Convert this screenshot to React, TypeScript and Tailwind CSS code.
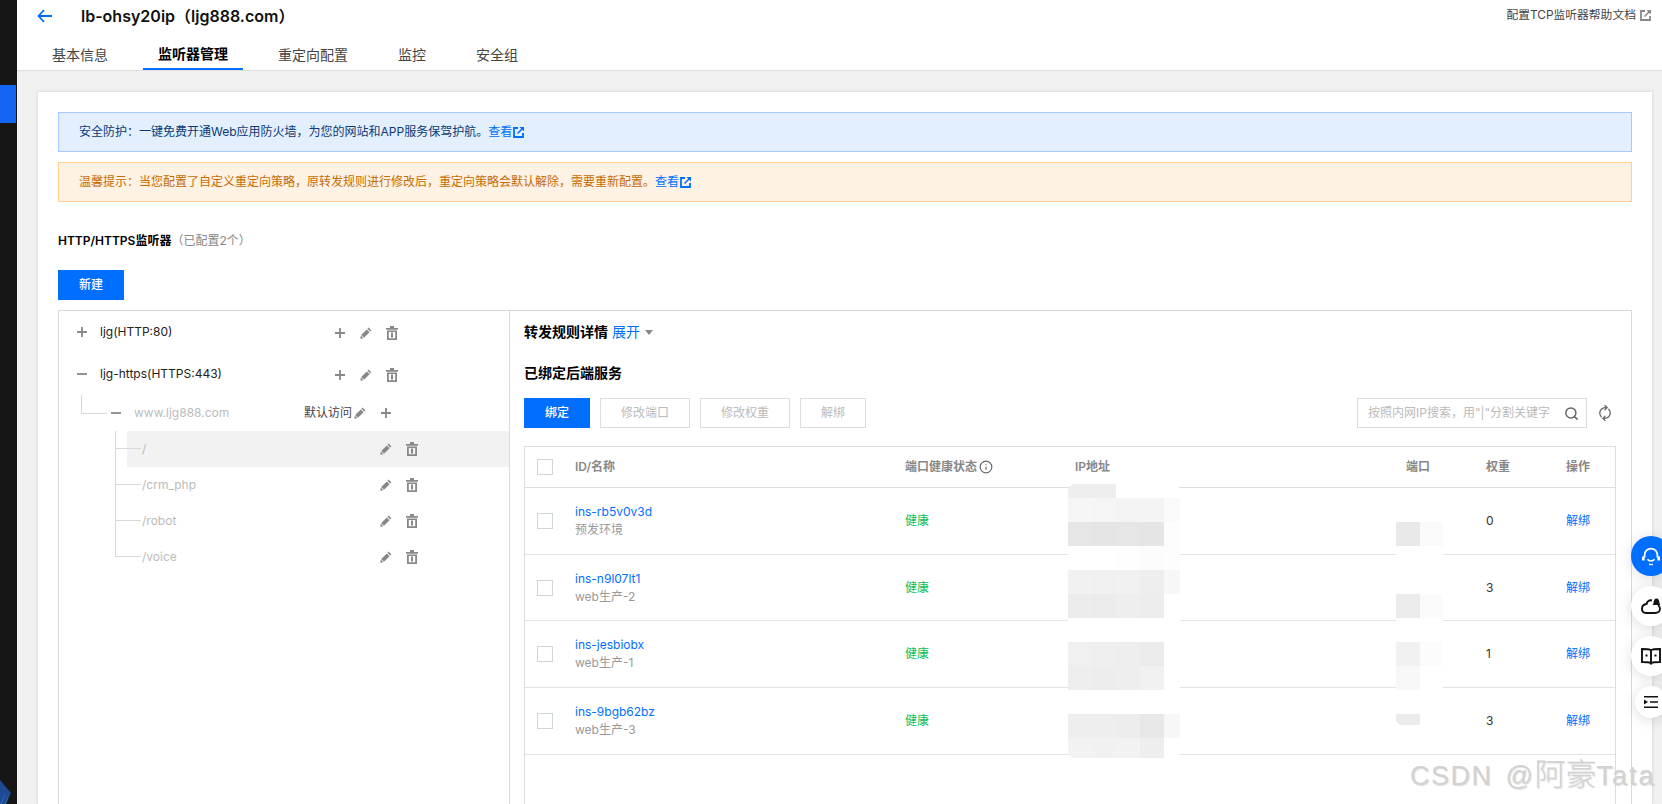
import { Search, RefreshCw, Info } from "lucide-react";

function Plus({ cls = "" }: { cls?: string }) {
  return (
    <svg width="10" height="10" viewBox="0 0 10 10" className={cls}>
      <path d="M0 4.100h10v1.800H0zM4.100 0h1.800v10H4.100z" fill="#888888" />
    </svg>
  );
}
function Minus() {
  return (
    <svg width="10" height="10" viewBox="0 0 10 10" className="shrink-0">
      <path d="M0 4.100h10v1.800H0z" fill="#888888" />
    </svg>
  );
}
function Pencil() {
  return (
    <svg width="12" height="12" viewBox="0 0 12 12" className="shrink-0">
      <path d="M8.600.6l2.800 2.800-1.200 1.200L7.400 1.800zM6.800 2.400l2.800 2.800-5.600 5.600-2.800-2.800zM.8 8.600l2.600 2.600-3.100.6z" fill="#888888" />
    </svg>
  );
}
function Trash() {
  return (
    <svg width="12" height="14" viewBox="0 0 12 14" className="shrink-0">
      <path d="M4 0h4v2h4v1.800H0V2h4zM1 4.600h10V14H1zm1.800 1.400v6.200h6.400V6zM5 6.600h2v5H5z" fill="#888888" fillRule="evenodd" />
    </svg>
  );
}
function Ext({ color }: { color: string }) {
  return (
    <svg width="11" height="11" viewBox="0 0 11 11" className="shrink-0">
      <path d="M5 1H1v9h9V6" fill="none" stroke={color} strokeWidth="1.800" />
      <path d="M6.500 0H11v4.500L9.300 2.800 5 7 4 6l4.200-4.300z" fill={color} />
    </svg>
  );
}

function Actions({ pr }: { pr: string }) {
  return (
    <div className={`ml-auto flex items-center gap-[14px] ${pr}`}>
      <Pencil />
      <Trash />
    </div>
  );
}

function TopRow({ open, label }: { open?: boolean; label: string }) {
  return (
    <div className="flex h-[42px] items-center pl-[18px] text-xs text-[#222222]">
      {open ? <Minus /> : <Plus cls="shrink-0" />}
      <span className="ml-[13px]">{label}</span>
      <div className="ml-auto flex items-center gap-[14px] pr-[111px] pt-[2px]">
        <Plus cls="mr-px" />
        <Pencil />
        <Trash />
      </div>
    </div>
  );
}

function Sub({ label, active, last }: { label: string; active?: boolean; last?: boolean }) {
  return (
    <div className={`ml-[68px] flex h-[36px] ${active ? "bg-[#f2f2f2]" : ""}`}>
      <div className="ml-[-12px] w-[26px] shrink-0">
        <div className="h-[18px] border-b border-l border-[#d9d9d9]" />
        {!last && <div className="h-[18px] border-l border-[#d9d9d9]" />}
      </div>
      <div className="ml-px flex flex-1 items-center text-xs text-[#bbbbbb]">
        <span>{label}</span>
        <Actions pr="pr-[91px]" />
      </div>
    </div>
  );
}

const cols = "grid grid-cols-[50px_330px_170px_331px_80px_80px_1fr]";

const rows = [
  { id: "ins-rb5v0v3d", sub: "预发环境", w: "0", h: "h-[67px]" },
  { id: "ins-n9l07lt1", sub: "web生产-2", w: "3", h: "h-[66px]" },
  { id: "ins-jesbiobx", sub: "web生产-1", w: "1", h: "h-[67px]" },
  { id: "ins-9bgb62bz", sub: "web生产-3", w: "3", h: "h-[67px]" },
];

function Check() {
  return <div className="ml-3 h-4 w-4 border border-[#cfd5de] bg-white" />;
}

const ipCells = [
  ["h-[14px] bg-[#eeeeee]", "h-[14px] bg-[#eeeeee]", "h-[14px] bg-white", "h-[14px] bg-white", "h-[14px] bg-white"],
  ["h-6 bg-[#f6f6f6]", "h-6 bg-[#f5f5f5]", "h-6 bg-[#f4f4f4]", "h-6 bg-[#f4f4f4]", "h-6 bg-[#fafafa]"],
  ["h-6 bg-[#e6e6e6]", "h-6 bg-[#e5e5e5]", "h-6 bg-[#e6e6e6]", "h-6 bg-[#e5e5e5]", "h-6 bg-[#fdfdfd]"],
  ["h-6 bg-white", "h-6 bg-white", "h-6 bg-[#fefefe]", "h-6 bg-[#fcfcfc]", "h-6 bg-[#fdfdfd]"],
  ["h-6 bg-[#f1f1f1]", "h-6 bg-[#f0f0f0]", "h-6 bg-[#f1f1f1]", "h-6 bg-[#eeeeee]", "h-6 bg-[#f7f7f7]"],
  ["h-6 bg-[#ececec]", "h-6 bg-[#ebebeb]", "h-6 bg-[#eeeeee]", "h-6 bg-[#ededed]", "h-6 bg-white"],
  ["h-6 bg-white", "h-6 bg-white", "h-6 bg-white", "h-6 bg-white", "h-6 bg-white"],
  ["h-6 bg-[#f0f0f0]", "h-6 bg-[#efefef]", "h-6 bg-[#eeeeee]", "h-6 bg-[#ebebeb]", "h-6 bg-white"],
  ["h-6 bg-[#eeeeee]", "h-6 bg-[#ededed]", "h-6 bg-[#eeeeee]", "h-6 bg-[#f1f1f1]", "h-6 bg-white"],
  ["h-6 bg-white", "h-6 bg-white", "h-6 bg-white", "h-6 bg-white", "h-6 bg-white"],
  ["h-6 bg-[#eeeeee]", "h-6 bg-[#eeeeee]", "h-6 bg-[#ededed]", "h-6 bg-[#e8e8e8]", "h-6 bg-[#f7f7f7]"],
  ["h-5 bg-[#f2f2f2]", "h-5 bg-[#f1f1f1]", "h-5 bg-[#f2f2f2]", "h-5 bg-[#eeeeee]", "h-5 bg-white"],
];

const portCells = [
  ["h-6 bg-white", "h-6 bg-white"],
  ["h-6 bg-[#e9e9e9]", "h-6 bg-[#fafafa]"],
  ["h-12 bg-white", "h-12 bg-white"],
  ["h-6 bg-[#ebebeb]", "h-6 bg-[#fbfbfb]"],
  ["h-6 bg-white", "h-6 bg-white"],
  ["h-6 bg-[#f1f1f1]", "h-6 bg-[#fcfcfc]"],
  ["h-6 bg-[#f8f8f8]", "h-6 bg-white"],
  ["h-6 bg-white", "h-6 bg-white"],
  ["h-[11px] bg-[#ebebeb]", "h-[11px] bg-white"],
];

export default function App() {
  return (
    <div className="relative flex h-[804px] w-full overflow-hidden bg-[#f1f1f1] font-['Inter','Noto_Sans_CJK_SC',sans-serif]">
      {/* sidebar */}
      <aside className="flex w-[17px] shrink-0 flex-col bg-[#161616] pt-[85px]">
        <div className="h-[38px] w-4 bg-[#1465f5]" />
        <svg width="12" height="24" viewBox="0 0 12 24" className="mt-auto">
          <path d="M0 0l11 13-5 11H0z" fill="#1d4a90" />
          <path d="M1 24l4-10M5 24l3-7" stroke="#2f66b8" strokeWidth="1" />
        </svg>
      </aside>

      <main className="flex min-w-0 flex-1 flex-col">
        {/* header */}
        <header className="h-[71px] shrink-0 border-b border-[#dddddd] bg-white">
          <div className="flex h-[31px] items-center">
            <svg width="15" height="14" viewBox="0 0 15 14" className="ml-5 shrink-0">
              <path d="M7 1L1.500 7 7 13M1.500 7H15" fill="none" stroke="#006eff" strokeWidth="1.800" />
            </svg>
            <h1 className="ml-[29px] text-base font-semibold text-[#111111]">lb-ohsy20ip（ljg888.com）</h1>
            <a className="ml-auto flex items-center gap-1 pr-[11px] text-[11.800px] text-[#444444]">
              配置TCP监听器帮助文档
              <Ext color="#888888" />
            </a>
          </div>
          <nav className="mt-[9px] flex h-[30px] text-sm text-[#444444]">
            <div className="ml-[35px] flex h-[30px] items-center">基本信息</div>
            <div className="ml-[35px] flex h-[30px] items-center border-b-2 border-[#006eff] px-[15px] font-semibold text-black">监听器管理</div>
            <div className="ml-[35px] flex h-[30px] items-center">重定向配置</div>
            <div className="ml-[50px] flex h-[30px] items-center">监控</div>
            <div className="ml-[50px] flex h-[30px] items-center">安全组</div>
          </nav>
        </header>

        {/* content */}
        <div className="flex min-h-0 flex-1 flex-col pl-[20px] pr-[9px] pt-5">
          <div className="flex min-h-0 flex-1 flex-col border-l border-r border-t border-[#e4e4e4] bg-white pl-5 pr-5 pt-5 shadow-[0_0_4px_rgba(0,0,0,0.06)]">
            <div className="flex h-10 shrink-0 items-center border border-[#a6c9ff] bg-[#e3effd] pl-5 text-xs text-[#0b3a75]">
              安全防护：一键免费开通Web应用防火墙，为您的网站和APP服务保驾护航。
              <span className="text-[#006eff]">查看</span>
              <span className="ml-px"><Ext color="#006eff" /></span>
            </div>
            <div className="mt-[10px] flex h-10 shrink-0 items-center border border-[#ffd08f] bg-[#fef2e4] pl-5 text-xs text-[#c76b00]">
              温馨提示：当您配置了自定义重定向策略，原转发规则进行修改后，重定向策略会默认解除，需要重新配置。
              <span className="text-[#006eff]">查看</span>
              <span className="ml-px"><Ext color="#006eff" /></span>
            </div>

            <div className="mt-[29px] flex h-5 shrink-0 items-center text-xs">
              <span className="font-semibold text-black">HTTP/HTTPS监听器</span>
              <span className="text-[#888888]">（已配置2个）</span>
            </div>
            <button className="mt-[19px] h-[30px] w-[66px] shrink-0 bg-[#006eff] text-xs font-medium text-white">新建</button>

            <div className="mt-[10px] flex min-h-0 flex-1 border-l border-r border-t border-[#d9d9d9]">
              {/* tree */}
              <section className="w-[451px] shrink-0 border-r border-[#d9d9d9]">
                <TopRow label="ljg(HTTP:80)" />
                <TopRow open label="ljg-https(HTTPS:443)" />
                <div className="flex h-9 items-center">
                  <div className="ml-[22px] mt-[-18px] h-[19px] w-[26px] shrink-0 border-b border-l border-[#d9d9d9]" />
                  <div className="ml-1"><Minus /></div>
                  <span className="ml-[13px] text-xs text-[#bbbbbb]">www.ljg888.com</span>
                  <div className="ml-auto flex items-center pr-[118px]">
                    <span className="text-xs text-[#444444]">默认访问</span>
                    <span className="ml-[2px]"><Pencil /></span>
                    <Plus cls="ml-[15px]" />
                  </div>
                </div>
                <Sub label="/" active />
                <Sub label="/crm_php" />
                <Sub label="/robot" />
                <Sub label="/voice" last />
              </section>

              {/* detail */}
              <section className="flex min-w-0 flex-1 flex-col pl-[14px] pr-[15px]">
                <div className="flex h-[42px] shrink-0 items-center text-sm">
                  <span className="font-semibold text-black">转发规则详情</span>
                  <span className="ml-1 text-[#006eff]">展开</span>
                  <svg width="8" height="5" viewBox="0 0 8 5" className="ml-[5px]"><path d="M0 0h8L4 5z" fill="#888888" /></svg>
                </div>
                <div className="flex h-[40px] shrink-0 items-center text-sm font-semibold text-black">已绑定后端服务</div>
                <div className="mt-[5px] flex h-[30px] shrink-0 items-stretch gap-[10px] text-xs">
                  <button className="w-[66px] bg-[#006eff] font-medium text-white">绑定</button>
                  <button className="w-[90px] border border-[#dddddd] text-[#bbbbbb]">修改端口</button>
                  <button className="w-[90px] border border-[#dddddd] text-[#bbbbbb]">修改权重</button>
                  <button className="w-[66px] border border-[#dddddd] text-[#bbbbbb]">解绑</button>
                  <div className="ml-auto flex w-[230px] items-center border border-[#dddddd] pl-[10px] pr-[7px] text-[#bbbbbb]">
                    <span className="truncate">按照内网IP搜索，用"|"分割关键字</span>
                    <Search size={15} strokeWidth={2.4} color="#666666" className="ml-auto shrink-0" />
                  </div>
                  <div className="flex w-[19px] items-center pl-px">
                    <RefreshCw size={14} strokeWidth={2.2} color="#666666" className="rotate-[-45deg]" />
                  </div>
                </div>

                {/* table */}
                <div className="mt-[18px] min-h-0 flex-1 border-l border-r border-t border-[#dddddd]">
                  <div className={`${cols} h-[41px] items-center border-b border-[#dddddd] text-xs font-semibold text-[#888888]`}>
                    <Check />
                    <div>ID/名称</div>
                    <div className="flex items-center gap-[2px]">端口健康状态<Info size={14} color="#666666" /></div>
                    <div>IP地址</div>
                    <div>端口</div>
                    <div>权重</div>
                    <div>操作</div>
                  </div>
                  {rows.map((r) => (
                    <div key={r.id} className={`${cols} ${r.h} items-center border-b border-[#e3e3e3] text-xs`}>
                      <Check />
                      <div className="leading-[18px]">
                        <div className="text-[#006eff]">{r.id}</div>
                        <div className="text-[#999999]">{r.sub}</div>
                      </div>
                      <div className="text-[#0abf5b]">健康</div>
                      <div />
                      <div />
                      <div className="text-[#333333]">{r.w}</div>
                      <div className="text-[#006eff]">解绑</div>
                    </div>
                  ))}
                </div>
              </section>
            </div>
          </div>
        </div>
      </main>

      {/* redaction mosaics lying over the table */}
      <div className="absolute left-[1068px] top-[484px] grid w-[112px] grid-cols-[24px_24px_24px_24px_16px] overflow-hidden rounded-[7px]">
        {ipCells.flat().map((c, i) => (
          <div key={i} className={c} />
        ))}
      </div>
      <div className="absolute left-[1396px] top-[498px] grid w-[47px] grid-cols-[24px_23px] overflow-hidden rounded-[6px]">
        {portCells.flat().map((c, i) => (
          <div key={i} className={c} />
        ))}
      </div>

      {/* floating tools */}
      <div className="absolute left-[1631px] top-[536px] flex flex-col gap-[10px]">
        <div className="flex h-10 w-10 items-center justify-center rounded-full bg-[#006eff] shadow-[0_2px_14px_rgba(0,0,0,0.14)]">
          <svg width="20" height="20" viewBox="0 0 20 20" fill="none">
            <path d="M3.600 11.500V9a6.400 6.400 0 0 1 12.800 0v2.500" stroke="white" strokeWidth="1.800" />
            <path d="M1 10.500h2.600v4H1zM16.400 10.500H19v4h-2.600z" fill="white" />
            <path d="M6.500 13.200c1.600 2.400 5.400 2.400 7 0" stroke="white" strokeWidth="1.600" />
            <path d="M8 18.500h4" stroke="white" strokeWidth="1.400" />
          </svg>
        </div>
        <div className="flex h-10 w-10 items-center justify-center rounded-full bg-white shadow-[0_2px_14px_rgba(0,0,0,0.14)]">
          <svg width="20" height="18" viewBox="0 0 20 18" fill="none">
            <path d="M11 3.500C8 2.500 6 4.500 5.600 7 3 7.300 1 9 1 11.800 1 14.600 3 16 5 16h9c3 0 5-1.800 5-4.200 0-1.500-.8-2.800-2-3.500" stroke="#111111" strokeWidth="1.900" />
            <path d="M12.500 6.500c0-3 1-5 3-5s3 2 3 5l1 1.500h-8z" fill="#111111" />
          </svg>
        </div>
        <div className="flex h-10 w-10 items-center justify-center rounded-full bg-white shadow-[0_2px_14px_rgba(0,0,0,0.14)]">
          <svg width="20" height="17" viewBox="0 0 20 17" fill="none">
            <path d="M10 2.200C8.500 1.300 6 1 1 1v13c5 0 7.500.300 9 1.200 1.500-.900 4-1.200 9-1.200V1c-5 0-7.500.300-9 1.200zM10 2.200V15.500" stroke="#111111" strokeWidth="1.900" />
            <path d="M4.500 6.500h2v2h-2zM13.500 6.500h2v2h-2z" fill="#111111" />
            <path d="M8.500 15.500L10 17l1.500-1.500" fill="#111111" />
          </svg>
        </div>
        <div className="ml-1 flex h-8 w-8 items-center justify-center rounded-full bg-white shadow-[0_2px_14px_rgba(0,0,0,0.14)]">
          <svg width="14" height="12" viewBox="0 0 14 12">
            <path d="M0 0h14v1.400H0zM0 10.600h14V12H0zM6 5.300h8v1.400H6z" fill="#111111" />
            <path d="M0 3.500L4 6 0 8.500z" fill="#111111" />
          </svg>
        </div>
      </div>

      {/* watermark */}
      <div className="absolute left-[1410px] top-[757px] flex items-baseline whitespace-nowrap text-[27px] leading-[36px] tracking-[1.500px] text-[#d2d2d2] [text-shadow:1px_1px_1px_rgba(120,120,120,0.25)] font-['Liberation_Sans','Noto_Sans_CJK_SC',sans-serif]">
        <span>CSDN</span>
        <span className="ml-[13px]">@</span>
        <span className="text-[31px] font-light tracking-normal">阿豪</span>
        <span className="tracking-[2px]">Tata</span>
      </div>
    </div>
  );
}
